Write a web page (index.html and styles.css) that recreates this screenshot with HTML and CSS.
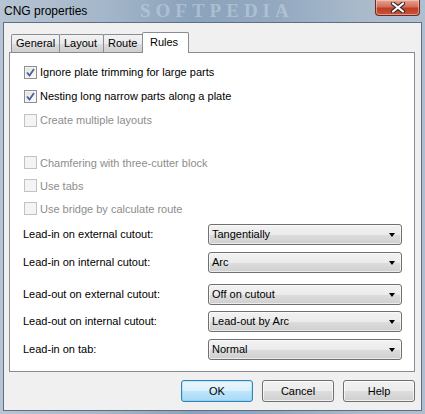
FILE: index.html
```html
<!DOCTYPE html>
<html>
<head>
<meta charset="utf-8">
<link rel="stylesheet" href="styles.css">
</head>
<body>
<div class="win">
  <div class="titlebar">
    <span class="title">CNG properties</span>
    <span class="wm-title">SOFTPEDIA</span>
    <div class="close">
      <svg width="16" height="11" viewBox="0 0 16 11"><path d="M3 1.5 L13 9.5 M13 1.5 L3 9.5" stroke="#3a2a2a" stroke-width="4.2" stroke-linecap="round"/><path d="M3 1.5 L13 9.5 M13 1.5 L3 9.5" stroke="#ffffff" stroke-width="2.2" stroke-linecap="round"/></svg>
    </div>
  </div>
  <div class="client">
    <div class="tabs">
      <div class="tab">General</div>
      <div class="tab">Layout</div>
      <div class="tab">Route</div>
      <div class="tab active">Rules</div>
    </div>
    <div class="panel">
      <div class="checks first">
        <label class="chk"><span class="box checked"><svg width="9" height="9" viewBox="0 0 9 9"><path d="M1 4.5 L3.5 7.5 L8 1" fill="none" stroke="#4b5f96" stroke-width="1.8"/></svg></span>Ignore plate trimming for large parts</label>
        <label class="chk"><span class="box checked"><svg width="9" height="9" viewBox="0 0 9 9"><path d="M1 4.5 L3.5 7.5 L8 1" fill="none" stroke="#4b5f96" stroke-width="1.8"/></svg></span>Nesting long narrow parts along a plate</label>
        <label class="chk disabled"><span class="box"></span>Create multiple layouts</label>
      </div>
      <div class="checks second">
        <label class="chk disabled"><span class="box"></span>Chamfering with three-cutter block</label>
        <label class="chk disabled"><span class="box"></span>Use tabs</label>
        <label class="chk disabled"><span class="box"></span>Use bridge by calculate route</label>
      </div>
      <div class="fields">
        <span class="lbl">Lead-in on external cutout:</span>
        <div class="select">Tangentially<span class="arrow"></span></div>
        <span class="lbl">Lead-in on internal cutout:</span>
        <div class="select">Arc<span class="arrow"></span></div>
        <span class="lbl">Lead-out on external cutout:</span>
        <div class="select">Off on cutout<span class="arrow"></span></div>
        <span class="lbl">Lead-out on internal cutout:</span>
        <div class="select">Lead-out by Arc<span class="arrow"></span></div>
        <span class="lbl">Lead-in on tab:</span>
        <div class="select">Normal<span class="arrow"></span></div>
      </div>
    </div>
    <div class="buttons">
      <button class="btn default">OK</button>
      <button class="btn">Cancel</button>
      <button class="btn">Help</button>
    </div>
  </div>
</div>
</body>
</html>
```
FILE: styles.css
```css
html, body {
  margin: 0;
  padding: 0;
}
body {
  font-family: "Liberation Sans", Arial, sans-serif;
  font-size: 11px;
  color: #000;
}
.win {
  width: 425px;
  height: 414px;
  display: flex;
  flex-direction: column;
  background: linear-gradient(90deg, #b6c4d3 0%, #a4b6c9 25%, #8aa2bb 45%, #93a9c0 65%, #a9bacb 85%, #b0bfcf 100%);
  position: relative;
}
.titlebar {
  height: 22px;
  display: flex;
  align-items: center;
  padding-left: 4px;
  position: relative;
  flex-shrink: 0;
}
.title {
  font-size: 12px;
  color: #000;
  position: relative;
  z-index: 2;
  padding-bottom: 1px;
}
.wm-title {
  position: absolute;
  left: 140px;
  top: 1px;
  line-height: 20px;
  font-family: "Liberation Serif", serif;
  font-weight: bold;
  font-size: 19px;
  letter-spacing: 5px;
  color: rgba(200, 213, 227, 0.55);
  z-index: 1;
}
.close {
  margin-left: auto;
  margin-right: 5px;
  align-self: flex-start;
  width: 43px;
  height: 15px;
  border: 1px solid #6b2a22;
  border-top: none;
  border-radius: 0 0 4px 4px;
  background: linear-gradient(180deg, #e8a493 0%, #d26f5a 45%, #bf3c25 55%, #c8553d 100%);
  display: flex;
  align-items: center;
  justify-content: center;
  box-shadow: inset 0 0 0 1px rgba(255, 220, 210, 0.5);
  position: relative;
  z-index: 2;
}
.client {
  flex: 1;
  margin: 0 3px 3px 3px;
  background: #f0f0f0;
  border: 1px solid #5e6f82;
  display: flex;
  flex-direction: column;
  padding: 9px 6px 0 5px;
}
.tabs {
  display: flex;
  align-items: flex-end;
  height: 20px;
  padding-left: 2px;
  position: relative;
  z-index: 2;
}
.tab {
  height: 17px;
  line-height: 17px;
  padding: 0 4px;
  border: 1px solid #898c95;
  border-bottom: none;
  margin-right: -1px;
  background: linear-gradient(180deg, #f2f2f2 0%, #ebebeb 50%, #dddddd 51%, #cfcfcf 100%);
  border-radius: 2px 2px 0 0;
}
.tab:nth-child(1) { width: 39px; }
.tab:nth-child(2) { width: 35px; }
.tab:nth-child(3) { width: 31px; }
.tab.active {
  height: 20px;
  line-height: 18px;
  background: #fff;
  margin-left: -1px;
  margin-bottom: -1px;
  width: 35px;
  padding: 0 3px 0 7px;
}
.panel {
  height: 320px;
  background: #fff;
  border: 1px solid #898c95;
  padding: 0 10px 0 13px;
  box-sizing: border-box;
}
.checks {
  display: flex;
  flex-direction: column;
}
.checks.first {
  padding-top: 7px;
}
.checks.second {
  margin-top: 19px;
}
.chk {
  display: flex;
  align-items: center;
  height: 24px;
  padding-left: 1px;
}
.checks.second .chk {
  height: 23px;
}
.box {
  width: 11px;
  height: 11px;
  border: 1px solid #8e8f8f;
  background: linear-gradient(135deg, #dcdcdc 0%, #f4f4f4 60%, #fbfbfb 100%);
  box-shadow: inset 0 0 0 1px #f4f4f4;
  margin-right: 3px;
  display: flex;
  align-items: center;
  justify-content: center;
}
.chk.disabled {
  color: #8d8d8d;
}
.chk.disabled .box {
  border-color: #c2c2c2;
  background: #f4f4f4;
  box-shadow: none;
}
.fields {
  display: grid;
  grid-template-columns: 185px 194px;
  grid-template-rows: 28px 32px 27px 28px 21px;
  margin-top: 4px;
}
.lbl {
  height: 21px;
  line-height: 21px;
}
.select {
  height: 21px;
  box-sizing: border-box;
  border: 1px solid #707070;
  border-radius: 3px;
  background: linear-gradient(180deg, #f2f2f2 0%, #ebebeb 50%, #dddddd 51%, #cfcfcf 100%);
  box-shadow: inset 0 0 0 1px rgba(255, 255, 255, 0.6);
  display: flex;
  align-items: center;
  padding-left: 3px;
  padding-right: 6px;
  line-height: 19px;
}
.arrow {
  margin-left: auto;
  width: 0;
  height: 0;
  border-left: 3.5px solid transparent;
  border-right: 3.5px solid transparent;
  border-top: 4px solid #000;
}
.buttons {
  display: flex;
  justify-content: flex-end;
  gap: 9px;
  margin-top: 8px;
}
.btn {
  width: 72px;
  height: 22px;
  font-family: "Liberation Sans", Arial, sans-serif;
  font-size: 11px;
  color: #000;
  border: 1px solid #707070;
  border-radius: 3px;
  background: linear-gradient(180deg, #f2f2f2 0%, #ebebeb 50%, #dddddd 51%, #cfcfcf 100%);
  box-shadow: inset 0 0 0 1px rgba(255, 255, 255, 0.7);
  padding: 0;
}
.btn.default {
  border-color: #3c7fb1;
  box-shadow: inset 0 0 0 1px #48d5fd55;
  background: linear-gradient(180deg, #eaf6fd 0%, #d9f0fc 50%, #bee6fd 51%, #a7d9f5 100%);
}
```
